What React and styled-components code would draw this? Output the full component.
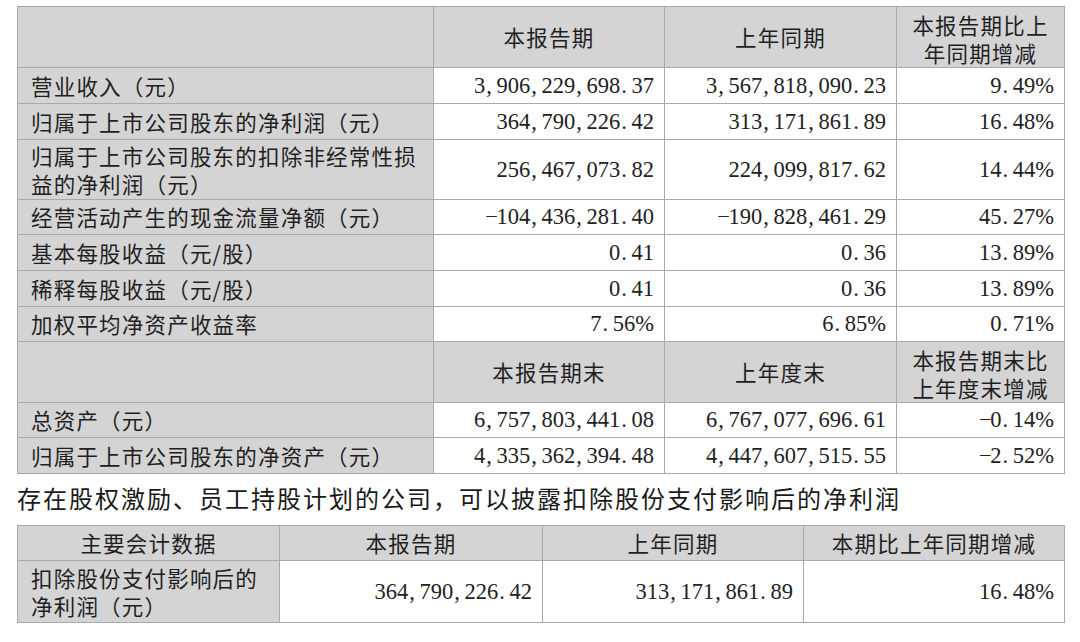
import React from 'react';
import styled, { createGlobalStyle } from 'styled-components';

const Global = createGlobalStyle`
  html, body { margin: 0; padding: 0; background: #ffffff; }
  body { font-family: "Noto Sans CJK SC", "Noto Sans", sans-serif; color: #1f1f1f; }
`;

const Page = styled.div`
  width: 1080px;
  height: 642px;
  box-sizing: border-box;
  padding: 6px 16px 0 17px;
  overflow: hidden;
`;

const Table = styled.table`
  width: 1047px;
  border-collapse: collapse;
  table-layout: fixed;
  border: 1px solid #8a8a8a;
`;

const Row = styled.tr`
  height: ${(p) => p.$h}px;
`;

const Cell = styled.td`
  border: 1px solid #a9a9a9;
  background: ${(p) => (p.$shade ? '#d4d4d4' : '#ffffff')};
  padding: 0 10px 0 13px;
  text-align: ${(p) => p.$align || 'left'};
  vertical-align: middle;
  font-size: 21.5px;
  letter-spacing: 1.2px;
  line-height: ${(p) => p.$lh || 26}px;
  white-space: nowrap;
  box-sizing: border-box;
`;

const HeadCell = styled(Cell)`
  background: #d4d4d4;
  text-align: center;
  padding: ${(p) => (p.$lh ? '4px 6px 0' : '0 6px')};
`;

const NumCell = styled(Cell)`
  font-family: "Liberation Serif", "Times New Roman", serif;
  font-size: 22.5px;
  letter-spacing: 0;
  text-align: right;
  padding-right: 10px;
  color: #222;
`;

const Punct = styled.span`
  display: inline-block;
  width: 0.5em;
  text-align: ${(p) => (p.$center ? 'center' : 'left')};
  padding-left: ${(p) => (p.$center ? '0' : '0.04em')};
  box-sizing: border-box;
`;

const Note = styled.p`
  margin: 10px 0 13px;
  font-size: 24px;
  letter-spacing: 2px;
  line-height: 28px;
  white-space: nowrap;
  color: #1a1a1a;
`;

const Money = ({ v }) => (
  <>
    {v
      .split(/([,.−])/)
      .filter((s) => s !== '')
      .map((s, i) =>
        /^[,.−]$/.test(s) ? (
          <Punct key={i} $center={s === '−'}>
            {s}
          </Punct>
        ) : (
          <React.Fragment key={i}>{s}</React.Fragment>
        )
      )}
  </>
);

const topRows = [
  { label: '营业收入（元）', a: '3,906,229,698.37', b: '3,567,818,090.23', c: '9.49%', h: 36 },
  { label: '归属于上市公司股东的净利润（元）', a: '364,790,226.42', b: '313,171,861.89', c: '16.48%', h: 36 },
  {
    label: ['归属于上市公司股东的扣除非经常性损', '益的净利润（元）'],
    a: '256,467,073.82',
    b: '224,099,817.62',
    c: '14.44%',
    h: 60,
    lh: 28,
  },
  { label: '经营活动产生的现金流量净额（元）', a: '−104,436,281.40', b: '−190,828,461.29', c: '45.27%', h: 35 },
  { label: '基本每股收益（元/股）', a: '0.41', b: '0.36', c: '13.89%', h: 36 },
  { label: '稀释每股收益（元/股）', a: '0.41', b: '0.36', c: '13.89%', h: 36 },
  { label: '加权平均净资产收益率', a: '7.56%', b: '6.85%', c: '0.71%', h: 35 },
];

const bottomRows = [
  { label: '总资产（元）', a: '6,757,803,441.08', b: '6,767,077,696.61', c: '−0.14%', h: 35 },
  { label: '归属于上市公司股东的净资产（元）', a: '4,335,362,394.48', b: '4,447,607,515.55', c: '−2.52%', h: 36 },
];

const Label = ({ label }) =>
  Array.isArray(label) ? (
    <>
      {label[0]}
      <br />
      {label[1]}
    </>
  ) : (
    label
  );

const DataRow = ({ r }) => (
  <Row $h={r.h}>
    <Cell $shade $lh={r.lh}>
      <Label label={r.label} />
    </Cell>
    <NumCell>
      <Money v={r.a} />
    </NumCell>
    <NumCell>
      <Money v={r.b} />
    </NumCell>
    <NumCell>
      <Money v={r.c} />
    </NumCell>
  </Row>
);

export default function App() {
  return (
    <Page>
      <Global />
      <Table>
        <colgroup>
          <col style={{ width: 416 }} />
          <col style={{ width: 231 }} />
          <col style={{ width: 232 }} />
          <col style={{ width: 168 }} />
        </colgroup>
        <tbody>
          <Row $h={61}>
            <HeadCell />
            <HeadCell>本报告期</HeadCell>
            <HeadCell>上年同期</HeadCell>
            <HeadCell $lh={28}>
              本报告期比上
              <br />
              年同期增减
            </HeadCell>
          </Row>
          {topRows.map((r, i) => (
            <DataRow key={i} r={r} />
          ))}
          <Row $h={61}>
            <HeadCell />
            <HeadCell>本报告期末</HeadCell>
            <HeadCell>上年度末</HeadCell>
            <HeadCell $lh={28}>
              本报告期末比
              <br />
              上年度末增减
            </HeadCell>
          </Row>
          {bottomRows.map((r, i) => (
            <DataRow key={i} r={r} />
          ))}
        </tbody>
      </Table>

      <Note>存在股权激励、员工持股计划的公司，可以披露扣除股份支付影响后的净利润</Note>

      <Table>
        <colgroup>
          <col style={{ width: 262 }} />
          <col style={{ width: 263 }} />
          <col style={{ width: 261 }} />
          <col style={{ width: 261 }} />
        </colgroup>
        <tbody>
          <Row $h={35}>
            <HeadCell>主要会计数据</HeadCell>
            <HeadCell>本报告期</HeadCell>
            <HeadCell>上年同期</HeadCell>
            <HeadCell>本期比上年同期增减</HeadCell>
          </Row>
          <Row $h={62}>
            <Cell $shade $lh={28}>
              扣除股份支付影响后的
              <br />
              净利润（元）
            </Cell>
            <NumCell>
              <Money v="364,790,226.42" />
            </NumCell>
            <NumCell>
              <Money v="313,171,861.89" />
            </NumCell>
            <NumCell>
              <Money v="16.48%" />
            </NumCell>
          </Row>
        </tbody>
      </Table>
    </Page>
  );
}
